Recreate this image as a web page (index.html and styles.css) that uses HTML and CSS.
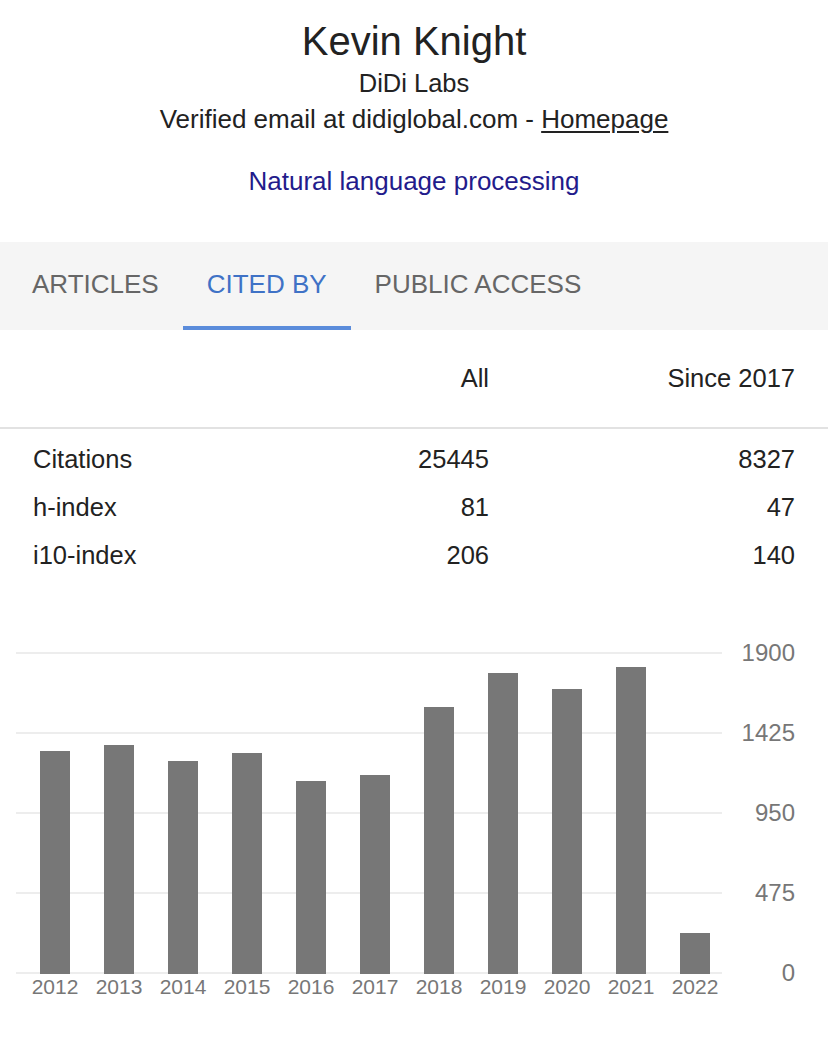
FILE: index.html
```html
<!DOCTYPE html>
<html lang="en">
<head>
<meta charset="utf-8">
<title>Kevin Knight - Google Scholar</title>
<link rel="stylesheet" href="styles.css">
</head>
<body>
<header class="profile">
  <h1 class="name">Kevin Knight</h1>
  <div class="affil">DiDi Labs</div>
  <div class="email">Verified email at didiglobal.com - <a class="home" href="#">Homepage</a></div>
  <div class="interests"><a class="interest" href="#">Natural language processing</a></div>
</header>

<nav class="tabs">
  <a class="tab" href="#">ARTICLES</a>
  <a class="tab active" href="#">CITED BY</a>
  <a class="tab" href="#">PUBLIC ACCESS</a>
</nav>

<section class="stats">
  <div class="stats-head">
    <span></span>
    <span class="num">All</span>
    <span class="num">Since 2017</span>
  </div>
  <div class="stats-row">
    <span>Citations</span>
    <span class="num">25445</span>
    <span class="num">8327</span>
  </div>
  <div class="stats-row">
    <span>h-index</span>
    <span class="num">81</span>
    <span class="num">47</span>
  </div>
  <div class="stats-row">
    <span>i10-index</span>
    <span class="num">206</span>
    <span class="num">140</span>
  </div>
</section>

<section class="chart">
  <div class="plot-col">
    <div class="plot">
      <div class="bar" style="height:223px"></div>
      <div class="bar" style="height:229px"></div>
      <div class="bar" style="height:213px"></div>
      <div class="bar" style="height:221px"></div>
      <div class="bar" style="height:193px"></div>
      <div class="bar" style="height:199px"></div>
      <div class="bar" style="height:267px"></div>
      <div class="bar" style="height:301px"></div>
      <div class="bar" style="height:285px"></div>
      <div class="bar" style="height:307px"></div>
      <div class="bar" style="height:41px"></div>
    </div>
    <div class="years">
      <span class="year">2012</span>
      <span class="year">2013</span>
      <span class="year">2014</span>
      <span class="year">2015</span>
      <span class="year">2016</span>
      <span class="year">2017</span>
      <span class="year">2018</span>
      <span class="year">2019</span>
      <span class="year">2020</span>
      <span class="year">2021</span>
      <span class="year">2022</span>
    </div>
  </div>
  <div class="axis">
    <span class="tick">1900</span>
    <span class="tick">1425</span>
    <span class="tick">950</span>
    <span class="tick">475</span>
    <span class="tick">0</span>
  </div>
</section>
</body>
</html>
```

FILE: styles.css
```css
* { box-sizing: border-box; }

body {
  margin: 0;
  background: #fff;
  color: #222;
  font-family: "Liberation Sans", Arial, sans-serif;
}

a { text-decoration: none; }

.profile {
  padding-top: 17px;
  text-align: center;
}

.name {
  margin: 0;
  font-size: 40px;
  line-height: 48px;
  font-weight: normal;
  color: #222;
}

.affil {
  font-size: 25.5px;
  line-height: 36px;
  color: #222;
}

.email {
  font-size: 26px;
  line-height: 36px;
  color: #222;
}

.home {
  color: #222;
  text-decoration: underline;
  text-underline-offset: 3px;
  text-decoration-thickness: 2px;
}

.interests {
  margin-top: 26px;
  font-size: 26px;
  line-height: 36px;
}

.interest { color: #231b8b; }

.tabs {
  margin-top: 43px;
  height: 88px;
  background: #f5f5f5;
  display: flex;
  padding-left: 8px;
}

.tab {
  display: flex;
  align-items: center;
  padding: 0 24px;
  font-size: 26px;
  color: #666;
  border-bottom: 4px solid transparent;
}

.tab.active {
  color: #3f72c6;
  border-bottom-color: #5b8cdb;
}

.stats {
  padding: 0 33px;
  font-size: 25.5px;
  color: #222;
}

.stats-head,
.stats-row {
  display: grid;
  grid-template-columns: 1fr 160px 306px;
}

.stats-head {
  height: 99px;
  align-items: center;
  margin: 0 -33px;
  padding: 0 33px;
  border-bottom: 2px solid #e2e2e2;
}

.stats-head + .stats-row { margin-top: 6px; }

.stats-row { line-height: 48px; }

.num { text-align: right; }

.chart {
  margin-top: 73px;
  display: flex;
  padding-left: 16px;
}

.plot-col { width: 706px; }

.plot {
  height: 322px;
  display: flex;
  align-items: flex-end;
  gap: 34px;
  padding-left: 24px;
  background: repeating-linear-gradient(to bottom, #ededed 0, #ededed 2px, transparent 2px, transparent 80px);
}

.bar {
  width: 30px;
  background: #777;
}

.years {
  display: flex;
  gap: 34px;
  padding-left: 24px;
  margin-top: 1px;
}

.year {
  width: 30px;
  display: flex;
  justify-content: center;
  font-size: 21px;
  line-height: 24px;
  color: #777;
  white-space: nowrap;
}

.axis {
  width: 73px;
  height: 322px;
  display: flex;
  flex-direction: column;
  justify-content: space-between;
  align-items: flex-end;
}

.tick {
  height: 2px;
  line-height: 2px;
  font-size: 24px;
  color: #777;
}
```
